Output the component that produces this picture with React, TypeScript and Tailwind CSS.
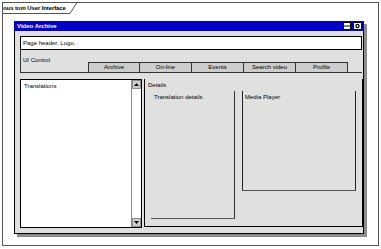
import React from 'react'

const tabs = ['Archive', 'On-line', 'Events', 'Search video', 'Profile']

function TitleButtons() {
  return (
    <div className="flex items-center gap-[2px] pr-[2px]">
      <svg width="8" height="8" viewBox="0 0 8 8">
        <rect x="0" y="0" width="8" height="8" fill="#000" />
        <rect x="1" y="1" width="6" height="2.5" fill="#fff" />
        <rect x="1" y="4.5" width="6" height="2.5" fill="#fff" />
      </svg>
      <svg width="9" height="8" viewBox="0 0 9 8">
        <rect x="0" y="0" width="9" height="8" fill="#000" />
        <rect x="1" y="1" width="7" height="6" fill="#fff" />
        <circle cx="4.5" cy="4" r="2.2" fill="#000" />
        <circle cx="4.5" cy="4" r="0.9" fill="#fff" />
      </svg>
    </div>
  )
}

function ScrollArrow({ down }: { down?: boolean }) {
  return (
    <div className="h-[9px] w-full bg-[#cfcfcf] border border-[#8c8c8c] flex items-center justify-center">
      <svg width="5" height="3" viewBox="0 0 5 3">
        <path d={down ? 'M0 0 H5 L2.5 3 Z' : 'M0 3 H5 L2.5 0 Z'} fill="#000" />
      </svg>
    </div>
  )
}

export default function App() {
  return (
    <div className="relative w-[381px] h-[249px] bg-white text-[6px] leading-[8px] text-black font-['Liberation_Sans',Arial,sans-serif]">
      <div className="relative ml-[2px] mt-[2px] w-[377px] h-[244px] border border-[#555]">
        {/* frame label tab */}
        <svg className="absolute left-[-1px] top-[-1px]" width="80" height="14" viewBox="0 0 80 14">
          <path d="M0 11.5 H68 L75 0.5" fill="none" stroke="#555" strokeWidth="1" />
        </svg>
        <div className="absolute left-[0px] top-[1px] font-bold tracking-[-0.1px]">ous tom User Interface</div>

        {/* window */}
        <div className="ml-[11px] mt-[18px] w-[350px] shadow-[3px_3px_0_#8c8c8c]">
          <div className="h-[10px] bg-[#0000c8] flex items-center justify-between">
            <span className="pl-[3px] text-white font-bold">Video Archive</span>
            <TitleButtons />
          </div>
          <div className="bg-[#e0e0e0] border-x border-b border-black flex flex-col pb-[5px]">
            <div className="mt-[5px] ml-[5px] w-[342px] h-[14px] bg-white border border-black pl-[2px] flex items-center">
              Page header. Logo.
            </div>

            <div className="ml-[5px] w-[342px] h-[23px] border-l border-b border-[#333] flex">
              <div className="w-[67px] pl-[2px] pt-[6px]">UI Control</div>
              <div className="flex self-end h-[10px]">
                {tabs.map((t, i) => (
                  <div
                    key={t}
                    className={`w-[52px] h-[10px] bg-[#cdcdcd] border-t border-r border-[#333] text-center leading-[9px] ${i === 0 ? 'border-l' : ''}`}
                  >
                    {t}
                  </div>
                ))}
              </div>
            </div>

            <div className="mt-[6px] ml-[5px] flex gap-[2px] h-[149px]">
              <div className="w-[122px] h-full bg-white border border-black flex">
                <div className="flex-1 pl-[3px] pt-[2px]">Translations</div>
                <div className="w-[10px] h-full border-l border-[#8c8c8c] bg-white flex flex-col justify-between">
                  <ScrollArrow />
                  <ScrollArrow down />
                </div>
              </div>

              <div className="w-[219px] h-[148px] border-x border-b border-black flex flex-col">
                <div className="pl-[3px] pt-[2px]">Details</div>
                <div className="mt-[2px] pl-[6px] flex items-start">
                  <div className="w-[84px] h-[128px] border-r border-b border-[#333] border-b-[#555] pl-[3px] pt-[2px]">
                    Translation details
                  </div>
                  <div className="ml-[7px] w-[114px] h-[100px] border-x border-b border-[#222] border-b-[#555] pl-[2px] pt-[2px]">
                    Media Player
                  </div>
                </div>
              </div>
            </div>
          </div>
        </div>
      </div>
    </div>
  )
}
